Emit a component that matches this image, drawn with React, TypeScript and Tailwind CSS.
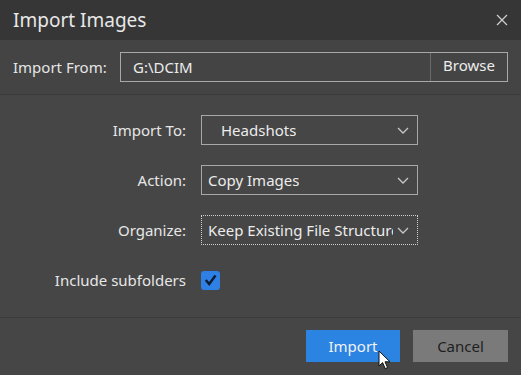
import React from 'react';

const Chevron: React.FC = () => (
  <svg width="12" height="7" viewBox="0 0 12 7" fill="none">
    <path d="M1 1l5 5 5-5" stroke="#c8c8c8" strokeWidth="1.3" />
  </svg>
);

const Select: React.FC<{ value: string; indent?: boolean; focused?: boolean }> = ({ value, indent, focused }) => (
  <div
    className={`flex h-[30px] w-[217px] items-center justify-between overflow-hidden border pr-[8px] ${
      focused ? 'border-dotted border-[#cfcfcf]' : 'border-[#a8a8a8]'
    } ${indent ? 'pl-[19px]' : 'pl-[6px]'}`}
  >
    <span className="overflow-hidden whitespace-nowrap text-[15px] text-[#ececec]">{value}</span>
    <span className="ml-[4px] shrink-0">
      <Chevron />
    </span>
  </div>
);

export default function App() {
  return (
    <div
      className="flex h-[375px] w-[521px] flex-col bg-[#464646] text-[#e6e6e6]"
      style={{ fontFamily: '"Noto Sans", "Open Sans", sans-serif' }}
    >
      {/* Title bar */}
      <div className="flex h-[40px] items-center justify-between bg-[#363636] pl-[13px] pr-[13px]">
        <span className="text-[19px] text-[#e8e8e8]">Import Images</span>
        <svg width="12" height="12" viewBox="0 0 12 12">
          <path d="M1 1l10 10M11 1L1 11" stroke="#d0d0d0" strokeWidth="1.2" />
        </svg>
      </div>

      {/* Import From */}
      <div className="flex h-[55px] items-center border-b border-[#3a3a3a] bg-[#444444] pl-[13px] pr-[13px]">
        <span className="w-[107px] text-[15px]">Import From:</span>
        <div className="flex h-[30px] flex-1 items-stretch border border-[#a8a8a8]">
          <span className="flex flex-1 items-center border-r border-[#6a6a6a] pl-[12px] text-[15px] text-[#ececec]">
            G:\DCIM
          </span>
          <span className="flex w-[76px] items-center justify-center pb-[3px] text-[15px] text-[#ececec]">Browse</span>
        </div>
      </div>

      {/* Options */}
      <div className="flex flex-1 flex-col gap-[20px] border-b border-[#3b3b3b] pt-[20px]">
        <div className="flex items-center">
          <span className="w-[201px] pr-[15px] text-right text-[15px]">Import To:</span>
          <Select value="Headshots" indent />
        </div>
        <div className="flex items-center">
          <span className="w-[201px] pr-[15px] text-right text-[15px]">Action:</span>
          <Select value="Copy Images" />
        </div>
        <div className="flex items-center">
          <span className="w-[201px] pr-[15px] text-right text-[15px]">Organize:</span>
          <Select value="Keep Existing File Structure" focused />
        </div>
        <div className="flex items-center pt-[4px]">
          <span className="w-[201px] pr-[15px] text-right text-[15px]">Include subfolders</span>
          <div className="flex h-[19px] w-[19px] items-center justify-center rounded-[3px] bg-[#2f80e4]">
            <svg width="13" height="12" viewBox="0 0 13 12" fill="none">
              <path d="M1.8 6l3.4 4L11.5 1.5" stroke="#0d1b33" strokeWidth="2.4" />
            </svg>
          </div>
        </div>
      </div>

      {/* Footer */}
      <div className="flex h-[57px] items-start justify-end gap-[13px] pr-[13px] pt-[12px]">
        <div className="relative flex h-[32px] w-[94px] items-center justify-center bg-[#2b83e2] text-[15px] text-[#f2f2f2]">
          Import
          <svg className="absolute left-[72px] top-[20px]" width="13" height="20" viewBox="0 0 13 20">
            <path d="M1 1v15l3.6-3.4 2.6 6 2.4-1-2.6-5.8H12z" fill="#ffffff" stroke="#111" strokeWidth="1" />
          </svg>
        </div>
        <div className="flex h-[32px] w-[95px] items-center justify-center bg-[#7a7a7a] text-[15px] text-[#1f1f1f]">
          Cancel
        </div>
      </div>
    </div>
  );
}
